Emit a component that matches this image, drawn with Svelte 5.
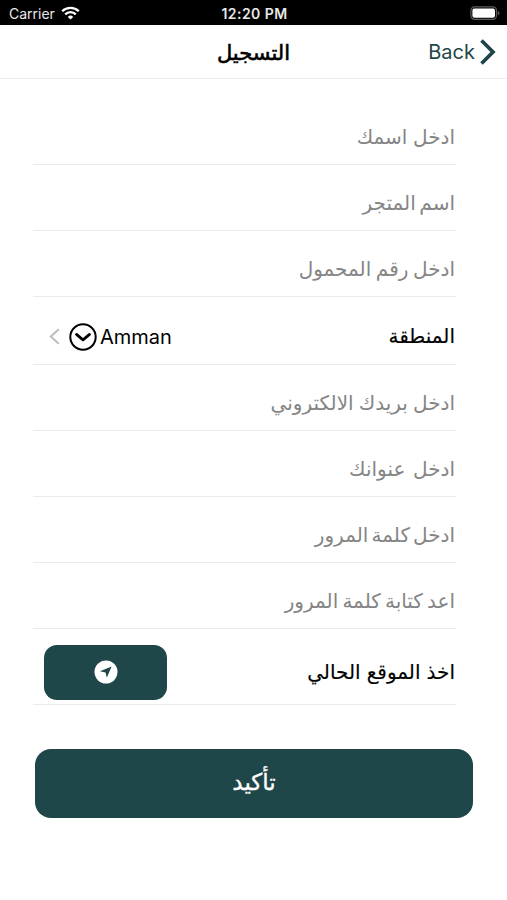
<script lang="ts">
  type Row = {
    kind: "input" | "region" | "location";
    label: string;
    spacing?: number;
  };

  const rows: Row[] = [
    { kind: "input", label: "ادخل اسمك" },
    { kind: "input", label: "اسم المتجر", spacing: -2 },
    { kind: "input", label: "ادخل رقم المحمول", spacing: -1 },
    { kind: "region", label: "المنطقة" },
    { kind: "input", label: "ادخل بريدك الالكتروني", spacing: -0.5 },
    { kind: "input", label: "ادخل عنوانك", spacing: 2 },
    { kind: "input", label: "ادخل كلمة المرور", spacing: -2.5 },
    { kind: "input", label: "اعد كتابة كلمة المرور", spacing: -1.5 },
    { kind: "location", label: "اخذ الموقع الحالي", spacing: 0.5 },
  ];

  let region = $state("Amman");
</script>

<div class="screen">
  <div class="status">
    <div class="carrier">
      <span>Carrier</span>
      <svg width="19" height="14" viewBox="0 0 19 14" fill="none" stroke="#fff" stroke-width="2.3">
        <path d="M1.2 5.2a11.8 11.8 0 0 1 16.6 0" />
        <path d="M4.2 8.4a7.5 7.5 0 0 1 10.6 0" />
        <path d="M9.5 13.6 6.8 10.9a3.8 3.8 0 0 1 5.4 0z" fill="#fff" stroke="none" />
      </svg>
    </div>
    <span class="time">12:20 PM</span>
    <div class="battery">
      <svg width="30" height="14" viewBox="0 0 30 14">
        <rect x="0.9" y="0.9" width="25.6" height="12.4" rx="3.6" fill="none" stroke="#5c5c5c" stroke-width="1.2" />
        <rect x="2.4" y="2.4" width="22.6" height="9.4" rx="2" fill="#fff" />
        <path d="M27.8 4.8q1.8.7 1.8 2.3t-1.8 2.3z" fill="#5c5c5c" />
      </svg>
    </div>
  </div>

  <header class="nav">
    <span></span>
    <h1>التسجيل</h1>
    <button class="back" type="button">
      <span>Back</span>
      <svg width="16" height="26" viewBox="0 0 16 26" fill="none" stroke="#1f4648" stroke-width="3.7">
        <path d="M1.5 1.5 13 13 1.5 24.5" />
      </svg>
    </button>
  </header>

  <form dir="rtl">
    {#each rows as row}
      <div class="row {row.kind}">
        <span class="label" style:word-spacing="{row.spacing ?? 0}px">{row.label}</span>
        {#if row.kind === "region"}
          <div class="picker" dir="ltr">
            <svg class="arrow" width="11" height="17" viewBox="0 0 11 17" fill="none" stroke="#bdbdbf" stroke-width="2">
              <path d="M9.8 1.2 1.8 8.5l8 7.3" />
            </svg>
            <svg width="28" height="28" viewBox="0 0 28 28" fill="none" stroke="#000" stroke-width="2">
              <circle cx="14" cy="14" r="12.7" />
              <path d="m7.5 11.4 6.5 5.5 6.5-5.5" stroke-width="2.7" stroke-linecap="round" stroke-linejoin="round" />
            </svg>
            <span>{region}</span>
          </div>
        {:else if row.kind === "location"}
          <button class="locate" type="button" aria-label={row.label}>
            <svg width="24" height="24" viewBox="0 0 24 24">
              <circle cx="12" cy="12" r="11.5" fill="#fff" />
              <path d="M17.6 6.6 6 11.2l5.6 1.2 1.2 5.4z" fill="#1f4648" />
            </svg>
          </button>
        {/if}
      </div>
    {/each}
    <button class="submit" type="button"><span>تأكيد</span></button>
  </form>
</div>

<style>
  :global(body) {
    margin: 0;
    background: #fff;
  }

  .screen {
    width: 507px;
    height: 900px;
    overflow: hidden;
    background: #fff;
    color: #000;
    font-family: Inter, "DejaVu Sans", sans-serif;
  }

  button {
    border: 0;
    padding: 0;
    font: inherit;
    cursor: pointer;
  }

  svg {
    display: block;
    flex: none;
  }

  .status {
    display: grid;
    grid-template-columns: 1fr auto 1fr;
    align-items: center;
    height: 25px;
    padding: 1px 7px 0 9px;
    box-sizing: border-box;
    background: #000;
    color: #e8e8e8;
    font-size: 14px;
  }

  .carrier {
    display: flex;
    align-items: center;
    gap: 6px;
  }

  .time {
    font-size: 14px;
    font-weight: 600;
    letter-spacing: 0.45px;
  }

  .battery {
    display: flex;
    justify-content: flex-end;
  }

  .nav {
    display: grid;
    grid-template-columns: 1fr auto 1fr;
    align-items: center;
    height: 54px;
    padding: 0 11px 0 11px;
    box-sizing: border-box;
    border-bottom: 1px solid #ededed;
  }

  h1 {
    margin: 0;
    padding-top: 1px;
    font-size: 21px;
    font-weight: 400;
    -webkit-text-stroke: 0.6px #000;
  }

  .back {
    display: flex;
    justify-content: flex-end;
    align-items: center;
    gap: 5px;
    background: none;
    color: #1f4648;
    font-size: 20px;
  }

  form {
    padding: 20px 51px 0 33px;
  }

  .row {
    display: flex;
    align-items: center;
    justify-content: space-between;
    height: 66px;
    padding: 12px 0 1px;
    box-sizing: border-box;
    border-bottom: 1px solid #ebebeb;
    font-size: 20px;
  }

  .input {
    color: #858585;
  }

  .region {
    height: 68px;
  }

  .location {
    height: 76px;
  }

  .label {
    padding-right: 1px;
    white-space: nowrap;
  }

  .region .label,
  .location .label {
    -webkit-text-stroke: 0.15px #000;
  }

  .picker {
    display: flex;
    align-items: center;
    gap: 3px;
    margin-left: 16px;
    padding-top: 1px;
  }

  .arrow {
    margin-right: 6px;
  }

  .locate {
    display: flex;
    align-items: center;
    justify-content: center;
    width: 123px;
    height: 55px;
    margin-left: 11px;
    border-radius: 13px;
    background: #1f4648;
  }

  .submit {
    width: 438px;
    height: 69px;
    margin: 44px -17px 0 0;
    padding-bottom: 3px;
    border-radius: 16px;
    background: #1f4648;
    color: #fff;
    font-size: 23px;
    -webkit-text-stroke: 0.3px #fff;
  }
</style>
